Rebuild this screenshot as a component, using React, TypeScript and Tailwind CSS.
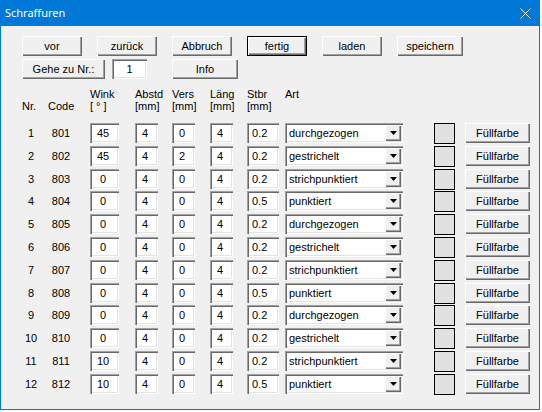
import React from "react";

const raised =
  "bg-[#f0f0f0] shadow-[inset_1px_1px_#ffffff,inset_-1px_-1px_#696969,inset_-2px_-2px_#a0a0a0]";
const sunken =
  "bg-white shadow-[inset_1px_1px_#a0a0a0,inset_2px_2px_#696969,inset_-1px_-1px_#ffffff,inset_-2px_-2px_#e3e3e3]";

const rows = [
  [1, 801, "45", "4", "0", "4", "0.2", "durchgezogen"],
  [2, 802, "45", "4", "2", "4", "0.2", "gestrichelt"],
  [3, 803, " 0", "4", "0", "4", "0.2", "strichpunktiert"],
  [4, 804, " 0", "4", "0", "4", "0.5", "punktiert"],
  [5, 805, " 0", "4", "0", "4", "0.2", "durchgezogen"],
  [6, 806, " 0", "4", "0", "4", "0.2", "gestrichelt"],
  [7, 807, " 0", "4", "0", "4", "0.2", "strichpunktiert"],
  [8, 808, " 0", "4", "0", "4", "0.5", "punktiert"],
  [9, 809, " 0", "4", "0", "4", "0.2", "durchgezogen"],
  [10, 810, " 0", "4", "0", "4", "0.2", "gestrichelt"],
  [11, 811, "10", "4", "0", "4", "0.2", "strichpunktiert"],
  [12, 812, "10", "4", "0", "4", "0.5", "punktiert"],
] as const;

function Btn({ label, w, def }: { label: string; w: string; def?: boolean }) {
  return (
    <div
      className={`${w} h-[20px] flex items-center justify-center ${
        def
          ? "border border-black bg-[#f0f0f0] shadow-[inset_1px_1px_#ffffff,inset_-1px_-1px_#696969,inset_-2px_-2px_#a0a0a0]"
          : raised
      }`}
    >
      {label}
    </div>
  );
}

function Field({ value, w, ml, pl }: { value: string; w: string; ml: string; pl: string }) {
  return (
    <div className={`${ml} ${w} ${pl} h-[20px] flex items-center whitespace-pre overflow-hidden ${sunken}`}>
      {value}
    </div>
  );
}

function Combo({ value }: { value: string }) {
  return (
    <div className={`ml-[6px] w-[118px] h-[20px] flex items-center pl-[4px] pr-[2px] ${sunken}`}>
      <span className="flex-1">{value}</span>
      <div className={`w-[16px] h-[16px] flex items-center justify-center ${raised}`}>
        <svg width="7" height="4" viewBox="0 0 7 4">
          <path d="M0 0h7L3.5 4z" fill="#000" />
        </svg>
      </div>
    </div>
  );
}

export default function App() {
  return (
    <div className="w-[542px] h-[412px] bg-white font-['Liberation_Sans',Arial,sans-serif] text-[11px] leading-[12px] text-black">
      <div className="w-[540px] h-[410px] flex flex-col bg-[#f0f0f0] border-x border-b border-[#0078d7]">
        <div className="h-[26px] shrink-0 bg-[#0078d7] flex items-center justify-between pl-[4px] pr-[8px]">
          <span className="font-['Noto_Sans',sans-serif] text-[11px] text-white">Schraffuren</span>
          <svg width="11" height="11" viewBox="0 0 11 11">
            <path d="M0.5 0.5l10 10M10.5 0.5l-10 10" stroke="#fff" strokeWidth="1" />
          </svg>
        </div>

        <div className="pl-[21px] pt-[10px] flex flex-col">
          <div className="flex gap-[15px]">
            <Btn label="vor" w="w-[60px]" />
            <Btn label="zurück" w="w-[60px]" />
            <Btn label="Abbruch" w="w-[60px]" />
            <Btn label="fertig" w="w-[60px]" def />
            <Btn label="laden" w="w-[60px]" />
            <Btn label="speichern" w="w-[66px]" />
          </div>
          <div className="flex mt-[3px]">
            <Btn label="Gehe zu Nr.:" w="w-[83px]" />
            <div className={`ml-[7px] w-[35px] h-[20px] flex items-center justify-center ${sunken}`}>1</div>
            <div className="ml-[25px]">
              <Btn label="Info" w="w-[66px]" />
            </div>
          </div>

          <div className="flex mt-[9px] h-[24px]">
            <div className="w-[18px] pt-[12px]">Nr.</div>
            <div className="ml-[8px] w-[26px] pt-[12px] text-center">Code</div>
            <div className="ml-[16px] w-[45px] flex flex-col">
              <span>Wink</span>
              <span className="whitespace-pre">[ ° ]</span>
            </div>
            <div className="w-[37px] flex flex-col">
              <span>Abstd</span>
              <span>[mm]</span>
            </div>
            <div className="w-[38px] flex flex-col">
              <span>Vers</span>
              <span>[mm]</span>
            </div>
            <div className="w-[37px] flex flex-col">
              <span>Läng</span>
              <span>[mm]</span>
            </div>
            <div className="w-[38px] flex flex-col">
              <span>Stbr</span>
              <span>[mm]</span>
            </div>
            <div>Art</div>
          </div>

          <div className="mt-[11px] flex flex-col">
            {rows.map((r) => (
              <div key={r[0]} className="h-[22.8px] flex items-start">
                <div className="w-[18px] h-[20px] flex items-center justify-center">{r[0]}</div>
                <div className="ml-[8px] w-[26px] h-[20px] flex items-center justify-center">{r[1]}</div>
                <Field value={r[2]} ml="ml-[16px]" w="w-[29px]" pl="pl-[7px]" />
                <Field value={r[3]} ml="ml-[16px]" w="w-[23px]" pl="pl-[7px]" />
                <Field value={r[4]} ml="ml-[14px]" w="w-[23px]" pl="pl-[7px]" />
                <Field value={r[5]} ml="ml-[15px]" w="w-[23px]" pl="pl-[7px]" />
                <Field value={r[6]} ml="ml-[14px]" w="w-[32px]" pl="pl-[5px]" />
                <Combo value={r[7]} />
                <div className="ml-[31px] w-[21px] h-[21px] border border-black bg-[#e1e1e1]" />
                <div className="ml-[10px]">
                  <Btn label="Füllfarbe" w="w-[65px]" />
                </div>
              </div>
            ))}
          </div>
        </div>
      </div>
    </div>
  );
}
